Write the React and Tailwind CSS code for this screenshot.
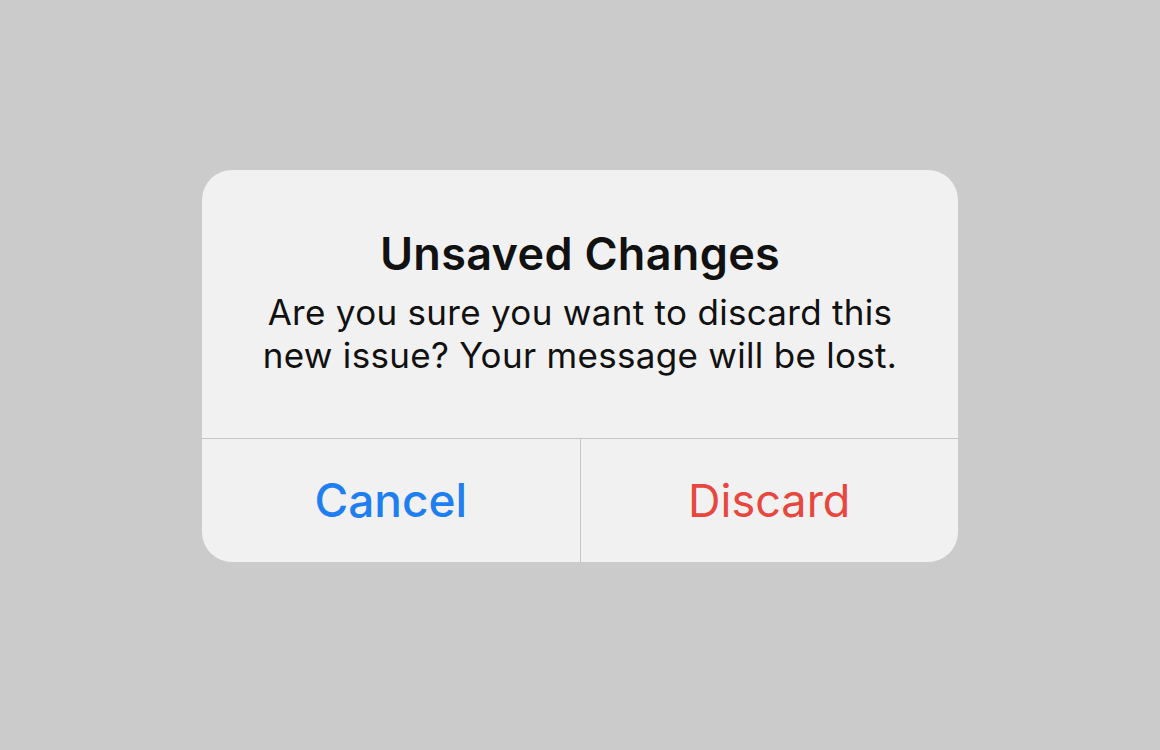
export default function App() {
  return (
    <div className="h-[750px] w-full bg-[#cbcbcb] flex justify-center pt-[170px] font-['Inter','Liberation_Sans',sans-serif]">
      <div className="w-[756px] h-[392px] bg-[#f1f1f1] rounded-[30px] flex flex-col overflow-hidden">
        {/* Text */}
        <div className="h-[268px] flex flex-col items-center pt-[58px] text-[#111]">
          <h1 className="text-[45px] leading-[51px] font-semibold tracking-[0.3px]">Unsaved Changes</h1>
          <p className="mt-[12px] text-[35px] leading-[43px] tracking-[0.3px] text-center">
            Are you sure you want to discard this
            <br />
            new issue? Your message will be lost.
          </p>
        </div>
        {/* Buttons */}
        <div className="flex-1 flex border-t border-[#c6c6c6]">
          <button className="flex-1 flex items-center justify-center text-[46px] text-[#1f7ff0] font-medium">
            Cancel
          </button>
          <div className="w-px bg-[#c6c6c6]" />
          <button className="flex-1 flex items-center justify-center text-[45px] text-[#e8473f]">
            Discard
          </button>
        </div>
      </div>
    </div>
  )
}
